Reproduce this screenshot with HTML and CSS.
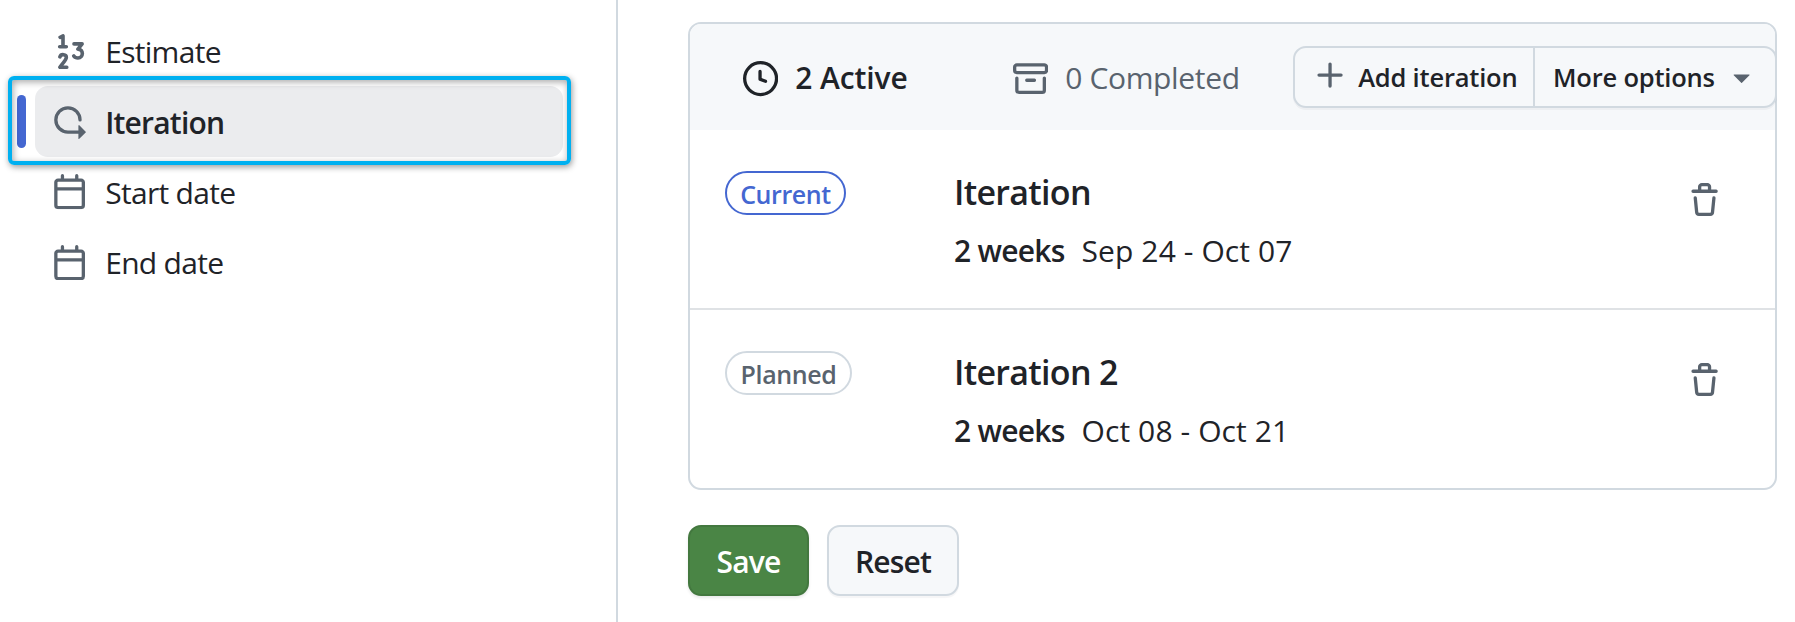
FILE: index.html
```
<!DOCTYPE html>
<html lang="en">
<head>
<meta charset="utf-8">
<title>Iteration settings</title>
<link rel="stylesheet" href="styles.css">
</head>
<body>
<svg class="sprite" aria-hidden="true">
  <symbol id="calendar" viewBox="0 0 16 16"><path d="M4.75 0a.75.75 0 0 1 .75.75V2h5V.75a.75.75 0 0 1 1.5 0V2h1.25c.966 0 1.75.784 1.75 1.75v10.5A1.75 1.75 0 0 1 13.25 16H2.75A1.75 1.75 0 0 1 1 14.25V3.75C1 2.784 1.784 2 2.75 2H4V.75A.75.75 0 0 1 4.75 0ZM2.5 7.5v6.75c0 .138.112.25.25.25h10.5a.25.25 0 0 0 .25-.25V7.5Zm10.75-4H2.75a.25.25 0 0 0-.25.25V6h11V3.75a.25.25 0 0 0-.25-.25Z"/></symbol>
  <symbol id="trash" viewBox="0 0 16 16"><path d="M11 1.75V3h2.25a.75.75 0 0 1 0 1.5H2.75a.75.75 0 0 1 0-1.5H5V1.75C5 .784 5.784 0 6.75 0h2.5C10.216 0 11 .784 11 1.75ZM4.496 6.675l.66 6.6a.25.25 0 0 0 .249.225h5.19a.25.25 0 0 0 .249-.225l.66-6.6a.75.75 0 0 1 1.492.149l-.66 6.6A1.748 1.748 0 0 1 10.595 15h-5.19a1.75 1.75 0 0 1-1.741-1.575l-.66-6.6a.75.75 0 1 1 1.492-.15ZM6.5 1.75V3h3V1.75a.25.25 0 0 0-.25-.25h-2.5a.25.25 0 0 0-.25.25Z"/></symbol>
</svg>
<div class="page">
  <nav class="sidebar">
    <a class="item">
      <svg class="icon number" viewBox="0 0 16 16"><path d="M3.7 1.5 5 .9V5.7M3.5 5.8H6.500M3.600 10.400c.5-1.500 3-1.200 2.900.3 0 1.300-1.500 2.300-2.900 4.400H6.700M10 4.500h3.700l-1.900 2.400c2.700 0 2.600 4 0 4-.9 0-1.500-.3-1.900-.9"/></svg>
      <span class="label">Estimate</span>
    </a>
    <a class="item selected">
      <svg class="icon" viewBox="0 0 16 16"><path d="M2.5 7.25a4.75 4.75 0 0 1 9.5 0 .75.75 0 0 0 1.5 0 6.25 6.25 0 1 0-6.25 6.25H12v2.146c0 .223.27.335.427.177l2.896-2.896a.25.25 0 0 0 0-.354l-2.896-2.896a.25.25 0 0 0-.427.177V12H7.25A4.75 4.75 0 0 1 2.5 7.25Z"/></svg>
      <span class="label">Iteration</span>
      <span class="marker"></span>
      <span class="frame"></span>
    </a>
    <a class="item"><svg class="icon"><use href="#calendar"/></svg><span class="label">Start date</span></a>
    <a class="item"><svg class="icon"><use href="#calendar"/></svg><span class="label">End date</span></a>
  </nav>
  <main class="content">
    <section class="panel">
      <header class="head">
        <div class="tab active">
          <svg class="icon" viewBox="0 0 16 16"><path d="M8 0a8 8 0 1 1 0 16A8 8 0 0 1 8 0ZM1.5 8a6.5 6.5 0 1 0 13 0 6.5 6.5 0 0 0-13 0Zm7-3.25v2.992l2.028.812a.75.75 0 0 1-.557 1.392l-2.5-1A.751.751 0 0 1 7 8.25v-3.5a.75.75 0 0 1 1.5 0Z"/></svg>
          <span class="label">2 Active</span>
        </div>
        <div class="tab completed">
          <svg class="icon" viewBox="0 0 16 16"><path d="M0 2.75C0 1.784.784 1 1.75 1h12.5c.966 0 1.75.784 1.75 1.75v1.5A1.75 1.75 0 0 1 14.25 6H1.75A1.75 1.75 0 0 1 0 4.25ZM1.75 7a.75.75 0 0 1 .75.75v5.5c0 .138.112.25.25.25h10.5a.25.25 0 0 0 .25-.25v-5.5a.75.75 0 0 1 1.5 0v5.5A1.75 1.75 0 0 1 13.25 15H2.75A1.75 1.75 0 0 1 1 13.25v-5.5A.75.75 0 0 1 1.75 7Zm0-4.5a.25.25 0 0 0-.25.25v1.5c0 .138.112.25.25.25h12.5a.25.25 0 0 0 .25-.25v-1.5a.25.25 0 0 0-.25-.25ZM6.25 8h3.5a.75.75 0 0 1 0 1.5h-3.5a.75.75 0 0 1 0-1.5Z"/></svg>
          <span class="label">0 Completed</span>
        </div>
        <div class="group">
          <button class="tool add">
            <svg class="icon" viewBox="0 0 16 16"><path d="M7.75 2a.75.75 0 0 1 .75.75V7h4.25a.75.75 0 0 1 0 1.5H8.5v4.25a.75.75 0 0 1-1.5 0V8.5H2.75a.75.75 0 0 1 0-1.5H7V2.75A.75.75 0 0 1 7.75 2Z"/></svg>
            <span class="label">Add iteration</span>
          </button>
          <button class="tool more">
            <span class="label">More options</span>
            <svg class="icon" viewBox="0 0 16 16"><path d="m4.427 7.427 3.396 3.396a.25.25 0 0 0 .354 0l3.396-3.396A.25.25 0 0 0 11.396 7H4.604a.25.25 0 0 0-.177.427Z"/></svg>
          </button>
        </div>
      </header>
      <article class="row">
        <div class="status"><span class="badge current">Current</span></div>
        <div class="info">
          <h3 class="title">Iteration</h3>
          <p class="meta"><b class="weeks">2 weeks</b><span class="dates">Sep 24 - Oct 07</span></p>
        </div>
        <svg class="icon trash"><use href="#trash"/></svg>
      </article>
      <article class="row">
        <div class="status"><span class="badge planned">Planned</span></div>
        <div class="info">
          <h3 class="title">Iteration 2</h3>
          <p class="meta"><b class="weeks">2 weeks</b><span class="dates">Oct 08 - Oct 21</span></p>
        </div>
        <svg class="icon trash"><use href="#trash"/></svg>
      </article>
    </section>
    <div class="actions">
      <button class="btn save">Save</button>
      <button class="btn reset">Reset</button>
    </div>
  </main>
</div>
</body>
</html>
```
FILE: styles.css
```
* { box-sizing: border-box; }
body {
  margin: 0;
  background: #fff;
  color: #1f2328;
  font-family: "Segoe UI", "Open Sans", "Noto Sans", sans-serif;
  font-size: 30px;
  line-height: 44px;
}
button { font: inherit; color: inherit; padding: 0; margin: 0; }
.sprite { position: absolute; width: 0; height: 0; }
.page { display: flex; width: 1795px; height: 622px; overflow: hidden; }
.icon { width: 35.2px; height: 35.2px; flex: none; fill: #59636e; }
.label { white-space: nowrap; }

.sidebar { width: 618px; flex: none; padding: 16px 0 0 35px; border-right: 2px solid #d1d9e0; }
.item {
  position: relative;
  display: flex;
  align-items: center;
  gap: 18px;
  width: 528px;
  height: 70.4px;
  padding-left: 17px;
  border-radius: 13px;
  letter-spacing: -0.7px;
}
.item .label { padding-top: 2px; }
.selected { background: #ebecee; font-weight: 600; letter-spacing: -0.8px; }
.number { fill: none; stroke: #59636e; stroke-width: 1.65; stroke-linecap: round; stroke-linejoin: round; }
.marker { position: absolute; left: -18px; top: 9px; width: 9px; height: 53px; border-radius: 5px; background: #4467d1; }
.frame {
  position: absolute;
  left: -27px;
  top: -10px;
  width: 563px;
  height: 89px;
  border: 4px solid #00b0f0;
  border-radius: 6px;
  box-shadow: 1px 2px 6px rgba(0,0,0,.4), inset 1px 2px 7px rgba(0,0,0,.35);
}

.content { padding: 22px 0 0 70px; }
.panel { width: 1089px; height: 468px; border: 2px solid #d1d9e0; border-radius: 13px; }
.head { display: flex; height: 106px; padding-top: 22px; background: #f6f8fa; border-radius: 11px 11px 0 0; }
.tab { display: flex; flex: none; align-items: center; gap: 17px; height: 66px; }
.tab .label { padding-bottom: 2px; }
.active { width: 270px; margin-left: 53px; font-weight: 600; letter-spacing: -0.1px; }
.active .icon { fill: #1f2328; }
.completed { width: 280px; color: #59636e; letter-spacing: -0.35px; }
.group {
  display: flex;
  flex: none;
  width: 484px;
  height: 62px;
  border: 2px solid #d1d9e0;
  border-radius: 13px;
  background: #f6f8fa;
  box-shadow: 0 2px 0 rgba(31,35,40,.04);
  font-size: 25.5px;
  font-weight: 600;
  letter-spacing: -0.2px;
}
.tool { display: flex; align-items: center; border: 0; background: none; letter-spacing: inherit; }
.add { width: 240px; padding-left: 18px; gap: 10px; border-right: 2px solid #d1d9e0; }
.add .icon { margin-bottom: 2px; }
.more { flex: 1; justify-content: space-between; padding: 0 16px 0 18px; }
.row { display: flex; height: 178px; padding-left: 35px; }
.row + .row { height: 180px; border-top: 2px solid #dfe2e5; }
.status { width: 229px; padding-top: 41px; }
.badge {
  display: flex;
  align-items: center;
  justify-content: center;
  height: 44px;
  border: 2px solid #d1d9e0;
  border-radius: 22px;
  font-size: 25px;
  font-weight: 600;
  letter-spacing: -0.4px;
  color: #59636e;
  padding-top: 2px;
}
.current { width: 121px; color: #4467d1; border-color: #4467d1; }
.planned { width: 127px; }
.info { width: 733px; padding-top: 38px; }
.title { margin: 0; font-size: 34px; line-height: 48px; font-weight: 600; letter-spacing: -0.7px; }
.meta { display: flex; gap: 17px; margin: 13px 0 0; line-height: 44px; white-space: nowrap; }
.weeks { font-weight: 600; letter-spacing: -0.75px; }
.dates { letter-spacing: 0.1px; }
.trash { margin-top: 53px; }
.actions { display: flex; gap: 18px; padding-top: 35px; }
.btn { height: 71px; border: 2px solid #d1d9e0; border-radius: 13px; font-weight: 600; letter-spacing: -0.8px; padding-top: 2px; }
.save { width: 121px; color: #fff; background: #4a8545; border-color: #43783f; box-shadow: 0 2px 3px rgba(31,35,40,.1); }
.reset { width: 132px; background: #f6f8fa; box-shadow: 0 2px 1px rgba(31,35,40,.04); }
```
